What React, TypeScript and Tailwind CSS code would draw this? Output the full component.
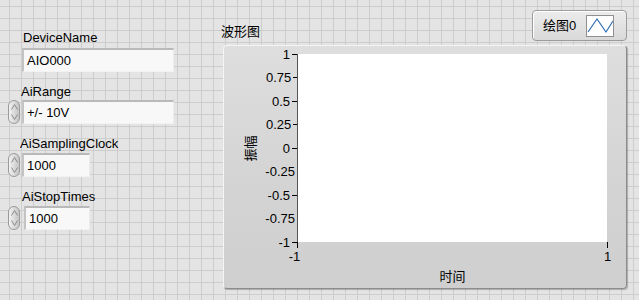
import React from "react";

const yTicks = ["1", "0.75", "0.5", "0.25", "0", "-0.25", "-0.5", "-0.75", "-1"];

const Spinner = () => (
  <div className="w-[12px] h-[24px] rounded-full border border-[#9a9a9a] bg-[linear-gradient(to_right,#f2f2f2,#c4c4c4)] flex flex-col items-center justify-between py-[3px]">
    <svg width="7" height="6" viewBox="0 0 7 6">
      <path d="M0.5 5.5 L3.5 0.5 L6.5 5.5" fill="none" stroke="#8a8a8a" strokeWidth="1" />
    </svg>
    <svg width="7" height="6" viewBox="0 0 7 6">
      <path d="M0.5 0.5 L3.5 5.5 L6.5 0.5" fill="none" stroke="#8a8a8a" strokeWidth="1" />
    </svg>
  </div>
);

const TextBox = ({ value, className }: { value: string; className: string }) => (
  <div
    className={`h-[24px] bg-[#f8f8f8] border-t-2 border-l-2 border-t-[#b9b9b9] border-l-[#c4c4c4] border-r border-b border-r-[#ececec] border-b-[#f2f2f2] pl-[3px] flex items-center text-[13px] text-black ${className}`}
  >
    {value}
  </div>
);

export default function App() {
  return (
    <div className="relative w-[639px] h-[300px] overflow-hidden bg-[#e4e4e4] bg-[linear-gradient(to_right,#cdcdcd_1px,transparent_1px),linear-gradient(to_bottom,#cdcdcd_1px,transparent_1px)] bg-[size:12px_12px] bg-[position:9px_6px] font-['Liberation_Sans','Noto_Sans_CJK_SC',sans-serif] flex">
      {/* Left controls */}
      <div className="w-[221px] pt-[30px] pl-[8px] flex flex-col">
        <div className="h-[15px] leading-[15px] text-[13px] pl-[15px]">DeviceName</div>
        <TextBox value="AIO000" className="mt-[3px] ml-[14px] w-[152px]" />

        <div className="mt-[12px] h-[15px] leading-[15px] text-[13px] pl-[13px]">AiRange</div>
        <div className="mt-[1px] flex items-center">
          <Spinner />
          <TextBox value="+/- 10V" className="ml-[2px] w-[152px]" />
        </div>

        <div className="mt-[12px] h-[15px] leading-[15px] text-[13px] pl-[12px]">AiSamplingClock</div>
        <div className="mt-[2px] flex items-center">
          <Spinner />
          <TextBox value="1000" className="ml-[2px] w-[68px]" />
        </div>

        <div className="mt-[12px] h-[15px] leading-[15px] text-[13px] pl-[14px]">AiStopTimes</div>
        <div className="mt-[2px] flex items-center">
          <Spinner />
          <TextBox value="1000" className="ml-[4px] w-[66px]" />
        </div>
      </div>

      {/* Waveform graph */}
      <div className="w-[406px] pt-[10px] flex flex-col">
        <div className="flex items-end justify-between h-[31px]">
          <div className="text-[13px] leading-[15px] mb-[2px]">波形图</div>
          <div className="w-[95px] h-[31px] rounded-[4px] border border-[#9c9c9c] bg-[linear-gradient(to_bottom,#ececec,#d9d9d9)] shadow-[inset_1px_1px_0_#ffffff] flex items-center pl-[10px]">
            <span className="text-[13px] leading-[15px]">绘图0</span>
            <div className="ml-[10px] w-[28px] h-[22px] bg-white border border-[#8f8f8f]">
              <svg width="26" height="20" viewBox="0 0 26 20">
                <polyline points="1,16 10,3 19,16 26,5" fill="none" stroke="#2f6fb4" strokeWidth="1.2" />
              </svg>
            </div>
          </div>
        </div>

        <div className="mt-[4px] ml-[2px] w-[404px] h-[244px] rounded-[4px] border border-t-[#f4f4f4] border-l-[#f4f4f4] border-r-[#8c8c8c] border-b-[#8c8c8c] bg-[linear-gradient(to_bottom,#dedede,#d3d3d3_60%,#cfcfcf)] shadow-[1px_1px_1px_rgba(0,0,0,0.25)] flex flex-col">
          <div className="flex mt-[8px]">
            {/* Y title */}
            <div className="w-[42px] h-[188px] flex items-center justify-center">
              <div className="-rotate-90 text-[13px] leading-[15px] font-['Noto_Sans_CJK_SC',sans-serif] whitespace-nowrap ml-[8px]">
                振幅
              </div>
            </div>
            {/* Y ticks */}
            <div className="w-[31px] h-[188px] flex flex-col justify-between">
              {yTicks.map((t) => (
                <div key={t} className="h-0 flex items-center justify-end">
                  <span className="text-[13px] leading-[15px] mr-[2px]">{t}</span>
                  <span className="w-[5px] h-px bg-black" />
                </div>
              ))}
            </div>
            {/* Plot */}
            <div className="w-[310px] h-[188px] bg-white border-l border-[#555555]" />
          </div>
          {/* X ticks */}
          <div className="flex ml-[73px] w-[311px] justify-between">
            <div className="flex flex-col items-center w-[1px]">
              <span className="w-px h-[6px] border-l border-dashed border-black" />
              <span className="text-[13px] leading-[15px] mt-[1px] -ml-[6px]">-1</span>
            </div>
            <div className="flex flex-col items-center w-[1px]">
              <span className="w-px h-[6px] border-l border-dashed border-black" />
              <span className="text-[13px] leading-[15px] mt-[1px]">1</span>
            </div>
          </div>
          <div className="ml-[73px] w-[311px] text-center text-[13px] leading-[15px] mt-[4px] font-['Noto_Sans_CJK_SC',sans-serif]">
            时间
          </div>
        </div>
      </div>
    </div>
  );
}
